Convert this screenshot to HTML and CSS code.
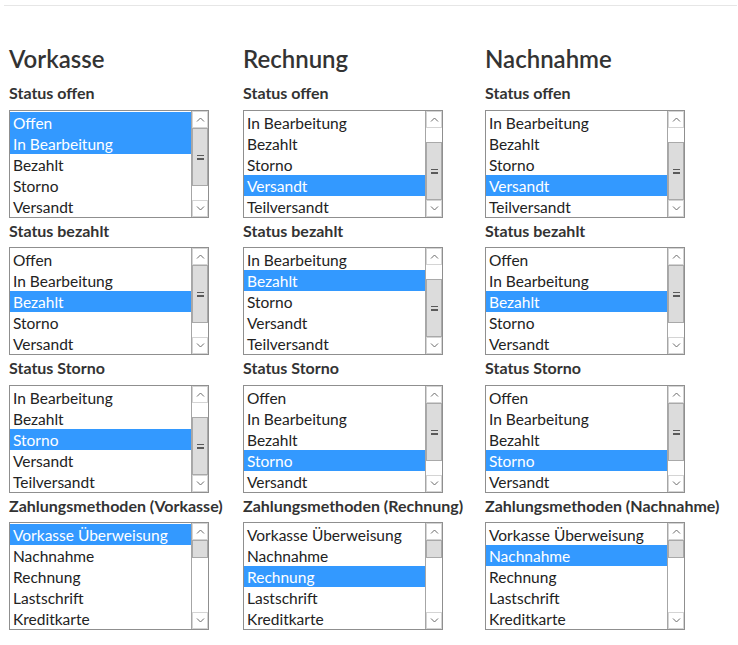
FILE: index.html
```html
<!DOCTYPE html>
<html lang="de">
<head>
<meta charset="utf-8">
<title>Statuszuordnung</title>
<link rel="stylesheet" href="styles.css">
</head>
<body>
<div class="topline"></div>
<main class="columns">
  <section class="col">
    <h2>Vorkasse</h2>
    <div class="field">
      <div class="label">Status offen</div>
      <div class="listbox">
        <ul class="options"><li class="sel">Offen</li><li class="sel">In Bearbeitung</li><li>Bezahlt</li><li>Storno</li><li>Versandt</li></ul>
        <div class="sb"><div class="btn"><svg viewBox="0 0 9 5"><path d="M1 4.5 4.5 1 8 4.5"/></svg></div><div class="track"><div class="thumb"><i></i></div></div><div class="btn"><svg viewBox="0 0 9 5"><path d="M1 .5 4.5 4 8 .5"/></svg></div></div>
      </div>
    </div>
    <div class="field">
      <div class="label">Status bezahlt</div>
      <div class="listbox">
        <ul class="options"><li>Offen</li><li>In Bearbeitung</li><li class="sel">Bezahlt</li><li>Storno</li><li>Versandt</li></ul>
        <div class="sb"><div class="btn"><svg viewBox="0 0 9 5"><path d="M1 4.5 4.5 1 8 4.5"/></svg></div><div class="track"><div class="thumb"><i></i></div></div><div class="btn"><svg viewBox="0 0 9 5"><path d="M1 .5 4.5 4 8 .5"/></svg></div></div>
      </div>
    </div>
    <div class="field">
      <div class="label">Status Storno</div>
      <div class="listbox">
        <ul class="options"><li>In Bearbeitung</li><li>Bezahlt</li><li class="sel">Storno</li><li>Versandt</li><li>Teilversandt</li></ul>
        <div class="sb"><div class="btn"><svg viewBox="0 0 9 5"><path d="M1 4.5 4.5 1 8 4.5"/></svg></div><div class="track end"><div class="thumb"><i></i></div></div><div class="btn"><svg viewBox="0 0 9 5"><path d="M1 .5 4.5 4 8 .5"/></svg></div></div>
      </div>
    </div>
    <div class="field">
      <div class="label">Zahlungsmethoden (Vorkasse)</div>
      <div class="listbox">
        <ul class="options"><li class="sel">Vorkasse Überweisung</li><li>Nachnahme</li><li>Rechnung</li><li>Lastschrift</li><li>Kreditkarte</li></ul>
        <div class="sb"><div class="btn"><svg viewBox="0 0 9 5"><path d="M1 4.5 4.5 1 8 4.5"/></svg></div><div class="track"><div class="thumb small"></div></div><div class="btn"><svg viewBox="0 0 9 5"><path d="M1 .5 4.5 4 8 .5"/></svg></div></div>
      </div>
    </div>
  </section>

  <section class="col">
    <h2>Rechnung</h2>
    <div class="field">
      <div class="label">Status offen</div>
      <div class="listbox">
        <ul class="options"><li>In Bearbeitung</li><li>Bezahlt</li><li>Storno</li><li class="sel">Versandt</li><li>Teilversandt</li></ul>
        <div class="sb"><div class="btn"><svg viewBox="0 0 9 5"><path d="M1 4.5 4.5 1 8 4.5"/></svg></div><div class="track end"><div class="thumb"><i></i></div></div><div class="btn"><svg viewBox="0 0 9 5"><path d="M1 .5 4.5 4 8 .5"/></svg></div></div>
      </div>
    </div>
    <div class="field">
      <div class="label">Status bezahlt</div>
      <div class="listbox">
        <ul class="options"><li>In Bearbeitung</li><li class="sel">Bezahlt</li><li>Storno</li><li>Versandt</li><li>Teilversandt</li></ul>
        <div class="sb"><div class="btn"><svg viewBox="0 0 9 5"><path d="M1 4.5 4.5 1 8 4.5"/></svg></div><div class="track end"><div class="thumb"><i></i></div></div><div class="btn"><svg viewBox="0 0 9 5"><path d="M1 .5 4.5 4 8 .5"/></svg></div></div>
      </div>
    </div>
    <div class="field">
      <div class="label">Status Storno</div>
      <div class="listbox">
        <ul class="options"><li>Offen</li><li>In Bearbeitung</li><li>Bezahlt</li><li class="sel">Storno</li><li>Versandt</li></ul>
        <div class="sb"><div class="btn"><svg viewBox="0 0 9 5"><path d="M1 4.5 4.5 1 8 4.5"/></svg></div><div class="track"><div class="thumb"><i></i></div></div><div class="btn"><svg viewBox="0 0 9 5"><path d="M1 .5 4.5 4 8 .5"/></svg></div></div>
      </div>
    </div>
    <div class="field">
      <div class="label">Zahlungsmethoden (Rechnung)</div>
      <div class="listbox">
        <ul class="options"><li>Vorkasse Überweisung</li><li>Nachnahme</li><li class="sel">Rechnung</li><li>Lastschrift</li><li>Kreditkarte</li></ul>
        <div class="sb"><div class="btn"><svg viewBox="0 0 9 5"><path d="M1 4.5 4.5 1 8 4.5"/></svg></div><div class="track"><div class="thumb small"></div></div><div class="btn"><svg viewBox="0 0 9 5"><path d="M1 .5 4.5 4 8 .5"/></svg></div></div>
      </div>
    </div>
  </section>

  <section class="col">
    <h2>Nachnahme</h2>
    <div class="field">
      <div class="label">Status offen</div>
      <div class="listbox">
        <ul class="options"><li>In Bearbeitung</li><li>Bezahlt</li><li>Storno</li><li class="sel">Versandt</li><li>Teilversandt</li></ul>
        <div class="sb"><div class="btn"><svg viewBox="0 0 9 5"><path d="M1 4.5 4.5 1 8 4.5"/></svg></div><div class="track end"><div class="thumb"><i></i></div></div><div class="btn"><svg viewBox="0 0 9 5"><path d="M1 .5 4.5 4 8 .5"/></svg></div></div>
      </div>
    </div>
    <div class="field">
      <div class="label">Status bezahlt</div>
      <div class="listbox">
        <ul class="options"><li>Offen</li><li>In Bearbeitung</li><li class="sel">Bezahlt</li><li>Storno</li><li>Versandt</li></ul>
        <div class="sb"><div class="btn"><svg viewBox="0 0 9 5"><path d="M1 4.5 4.5 1 8 4.5"/></svg></div><div class="track"><div class="thumb"><i></i></div></div><div class="btn"><svg viewBox="0 0 9 5"><path d="M1 .5 4.5 4 8 .5"/></svg></div></div>
      </div>
    </div>
    <div class="field">
      <div class="label">Status Storno</div>
      <div class="listbox">
        <ul class="options"><li>Offen</li><li>In Bearbeitung</li><li>Bezahlt</li><li class="sel">Storno</li><li>Versandt</li></ul>
        <div class="sb"><div class="btn"><svg viewBox="0 0 9 5"><path d="M1 4.5 4.5 1 8 4.5"/></svg></div><div class="track"><div class="thumb"><i></i></div></div><div class="btn"><svg viewBox="0 0 9 5"><path d="M1 .5 4.5 4 8 .5"/></svg></div></div>
      </div>
    </div>
    <div class="field">
      <div class="label">Zahlungsmethoden (Nachnahme)</div>
      <div class="listbox">
        <ul class="options"><li>Vorkasse Überweisung</li><li class="sel">Nachnahme</li><li>Rechnung</li><li>Lastschrift</li><li>Kreditkarte</li></ul>
        <div class="sb"><div class="btn"><svg viewBox="0 0 9 5"><path d="M1 4.5 4.5 1 8 4.5"/></svg></div><div class="track"><div class="thumb small"></div></div><div class="btn"><svg viewBox="0 0 9 5"><path d="M1 .5 4.5 4 8 .5"/></svg></div></div>
      </div>
    </div>
  </section>
</main>
</body>
</html>
```

FILE: styles.css
```css
html, body {
  margin: 0;
  padding: 0;
  background: #fff;
}
body {
  font-family: Lato, "Open Sans", sans-serif;
  color: #333;
}
.topline {
  height: 1px;
  background: #e6e6e6;
  margin: 5px 1px 0 4px;
}
.columns {
  display: grid;
  grid-template-columns: 214px 222px 200px;
  column-gap: 20px;
  padding: 38px 0 0 9px;
}
.col h2 {
  margin: 0;
  font-size: 24px;
  line-height: 30px;
  font-weight: 600;
  color: #333;
}
.col h2 + .field .label {
  margin-top: 9px;
}
.label {
  font-size: 16px;
  line-height: 20px;
  font-weight: 700;
  color: #333;
  white-space: nowrap;
  margin: 3px 0 6.5px;
}
.listbox {
  width: 200px;
  height: 108px;
  box-sizing: border-box;
  border: 1px solid #8f8f8f;
  display: flex;
  background: #fff;
}
.options {
  list-style: none;
  margin: 0;
  padding: 1px 0 0;
  flex: 1;
  min-width: 0;
}
.options li {
  height: 21px;
  box-sizing: border-box;
  padding: 1px 0 0 3px;
  line-height: 21px;
  font-size: 15.5px;
  color: #222;
  white-space: nowrap;
  overflow: hidden;
}
.options li.sel {
  background: #3399ff;
  color: #fff;
}
.sb {
  width: 16px;
  border-left: 1px solid #a6a6a6;
  display: flex;
  flex-direction: column;
  background: #fff;
}
.btn {
  height: 17px;
  flex: none;
  box-sizing: border-box;
  border: 1px solid #d4d4d4;
  display: flex;
  align-items: center;
  justify-content: center;
}
.btn svg {
  width: 9px;
  height: 5px;
  fill: none;
  stroke: #6a6a6a;
  stroke-width: 1;
}
.track {
  flex: 1;
  display: flex;
  flex-direction: column;
  justify-content: flex-start;
}
.track.end {
  justify-content: flex-end;
}
.thumb {
  height: 58px;
  box-sizing: border-box;
  border: 1px solid #a9a9a9;
  background: #dcdcdc;
  display: flex;
  align-items: center;
  justify-content: center;
}
.thumb.small {
  height: 18px;
}
.thumb i {
  display: block;
  width: 7px;
  height: 2px;
  border-top: 1px solid #5a5a5a;
  border-bottom: 1px solid #5a5a5a;
}
.thumb i::after {
  content: "";
  display: block;
  width: 7px;
  height: 1px;
  background: #5a5a5a;
  margin-top: 3px;
}
```
